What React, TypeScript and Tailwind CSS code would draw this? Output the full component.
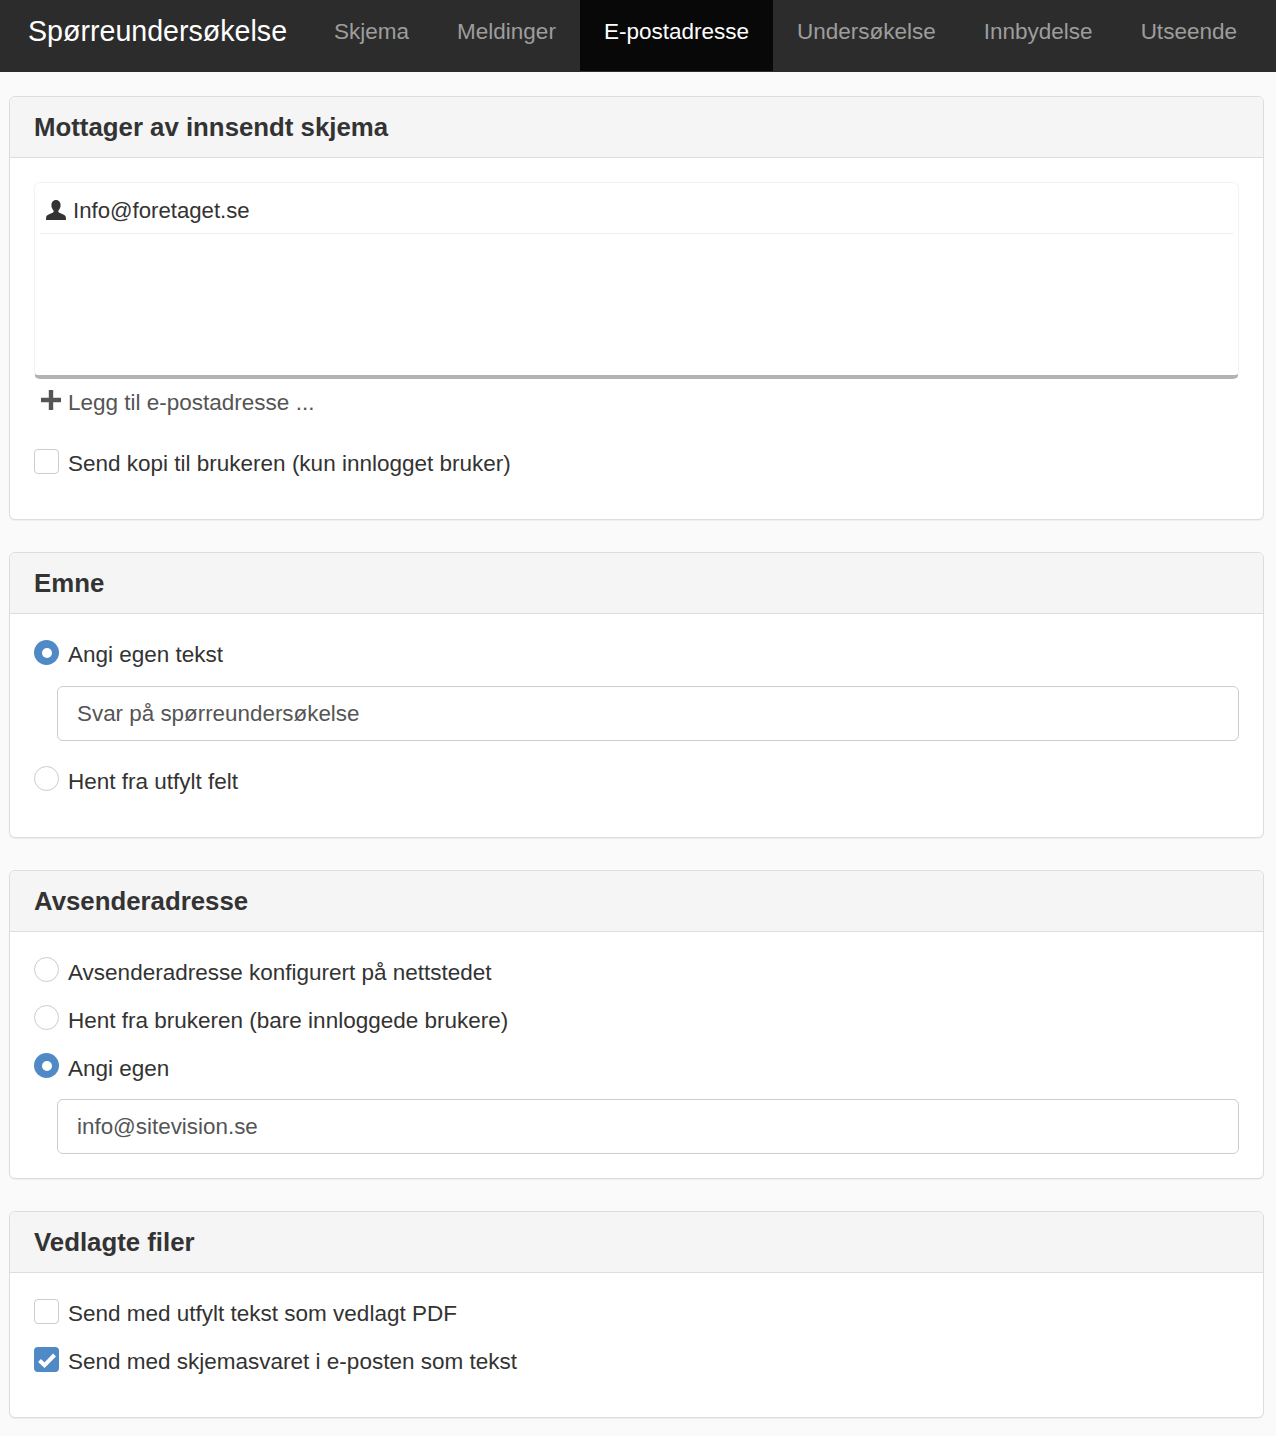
function Panel({ title, children, bodyClass }: { title: string; children: React.ReactNode; bodyClass: string }) {
  return (
    <section className="rounded-md border border-[#dddddd] bg-white shadow-[0_1px_1px_rgba(0,0,0,0.05)]">
      <h2 className="h-[61px] rounded-t-md border-b border-[#dddddd] bg-[#f5f5f5] px-6 text-[25.8px] leading-[60px] font-bold text-[#333333]">
        {title}
      </h2>
      <div className={bodyClass}>{children}</div>
    </section>
  );
}

function Check({ label, checked }: { label: string; checked?: boolean }) {
  return (
    <div className="flex h-12 items-start">
      {checked ? (
        <span className="flex h-[25px] w-[25px] items-center justify-center rounded bg-[#4f8ac7]">
          <svg viewBox="0 0 20 20" className="h-5 w-5 text-white">
            <path d="M2.5 10.5l5 4.8L17.5 5" fill="none" stroke="currentColor" strokeWidth="4" />
          </svg>
        </span>
      ) : (
        <span className="h-[25px] w-[25px] rounded border border-[#cccccc] bg-white" />
      )}
      <span className="mt-px ml-[9px] text-[22.5px] leading-7 text-[#333333]">{label}</span>
    </div>
  );
}

function Radio({ label, checked, tight }: { label: string; checked?: boolean; tight?: boolean }) {
  return (
    <div className="flex h-12 items-start">
      {checked ? (
        <span className="flex h-[25px] w-[25px] items-center justify-center rounded-full bg-[#4f8ac7]">
          <span className="h-2.5 w-2.5 rounded-full bg-white" />
        </span>
      ) : (
        <span className="h-[25px] w-[25px] rounded-full border border-[#cccccc] bg-white" />
      )}
      <span
        className={
          tight
            ? "mt-px ml-[9px] text-[22.5px] leading-7 text-[#333333]"
            : "mt-[2px] ml-[9px] text-[22.5px] leading-7 text-[#333333]"
        }
      >
        {label}
      </span>
    </div>
  );
}

function TextField({ value }: { value: string }) {
  return (
    <div className="ml-[23px] flex h-[55px] items-center rounded-md border border-[#cccccc] bg-white px-[19px] text-[22.4px] text-[#555555]">
      {value}
    </div>
  );
}

const tabs = ["Skjema", "Meldinger", "E-postadresse", "Undersøkelse", "Innbydelse", "Utseende"];

export default function App() {
  return (
    <div className="min-h-[1436px] bg-[#fafafa] font-['Liberation_Sans',Arial,sans-serif]">
      {/* Top nav */}
      <nav className="flex h-[72px] items-stretch bg-[#2c2c2c]">
        <div className="pr-[23px] pl-7 text-[28.6px] leading-[62px] text-white">Spørreundersøkelse</div>
        {tabs.map((tab) => (
          <a
            key={tab}
            className={
              tab === "E-postadresse"
                ? "h-[71px] bg-[#080808] px-6 text-[22.5px] leading-[63px] text-white"
                : "h-[71px] px-6 text-[22.5px] leading-[63px] text-[#9d9d9d]"
            }
          >
            {tab}
          </a>
        ))}
      </nav>

      <main className="flex flex-col gap-8 px-[9px] pt-6 pr-3">
        <Panel title="Mottager av innsendt skjema" bodyClass="h-[361px] px-6 pt-6">
          <div className="h-[197px] rounded-md border border-b-4 border-[#f3f3f3] border-b-[#b3b3b3] px-[5px]">
            <div className="flex h-[51px] items-center border-b border-[#eeeeee] pt-[5px] pl-[6px] text-[22.2px] text-[#333333]">
              <svg viewBox="0 0 20 20" className="mr-[7px] mb-[2px] h-5 w-5 fill-[#333333]">
                <path d="M10 0c-3 0-4.600 2.300-4.600 5.200 0 2 .8 3.800 2 5 .4.500.400 1.600-.4 2.300C5.200 13.600 1 14.500.2 16.800L0 20h20l-.2-3.200c-.8-2.300-5-3.200-6.800-4.300-.8-.7-.8-1.800-.4-2.300 1.200-1.200 2-3 2-5C14.600 2.300 13 0 10 0z" />
              </svg>
              Info@foretaget.se
            </div>
          </div>
          <div className="relative mt-[5px] flex h-[38px] items-center pl-[7px] text-[22.5px] text-[#555555]">
            <svg viewBox="0 0 20 20" className="mr-[7px] mb-[6px] h-5 w-5 fill-[#555555]">
              <path d="M7.800 0h4.400v7.800H20v4.400h-7.800V20H7.800v-7.800H0V7.800h7.800z" />
            </svg>
            Legg til e-postadresse ...
          </div>
          <div className="mt-[27px]">
            <Check label="Send kopi til brukeren (kun innlogget bruker)" />
          </div>
        </Panel>

        <Panel title="Emne" bodyClass="h-[223px] px-6 pt-[26px]">
          <Radio label="Angi egen tekst" checked tight />
          <div className="-mt-[2px] mb-[25px]">
            <TextField value="Svar på spørreundersøkelse" />
          </div>
          <Radio label="Hent fra utfylt felt" />
        </Panel>

        <Panel title="Avsenderadresse" bodyClass="h-[246px] px-6 pt-[25px]">
          <Radio label="Avsenderadresse konfigurert på nettstedet" />
          <Radio label="Hent fra brukeren (bare innloggede brukere)" />
          <Radio label="Angi egen" checked />
          <div className="-mt-[2px]">
            <TextField value="info@sitevision.se" />
          </div>
        </Panel>

        <Panel title="Vedlagte filer" bodyClass="h-[144px] px-6 pt-[26px]">
          <Check label="Send med utfylt tekst som vedlagt PDF" />
          <Check label="Send med skjemasvaret i e-posten som tekst" checked />
        </Panel>
      </main>
    </div>
  );
}
